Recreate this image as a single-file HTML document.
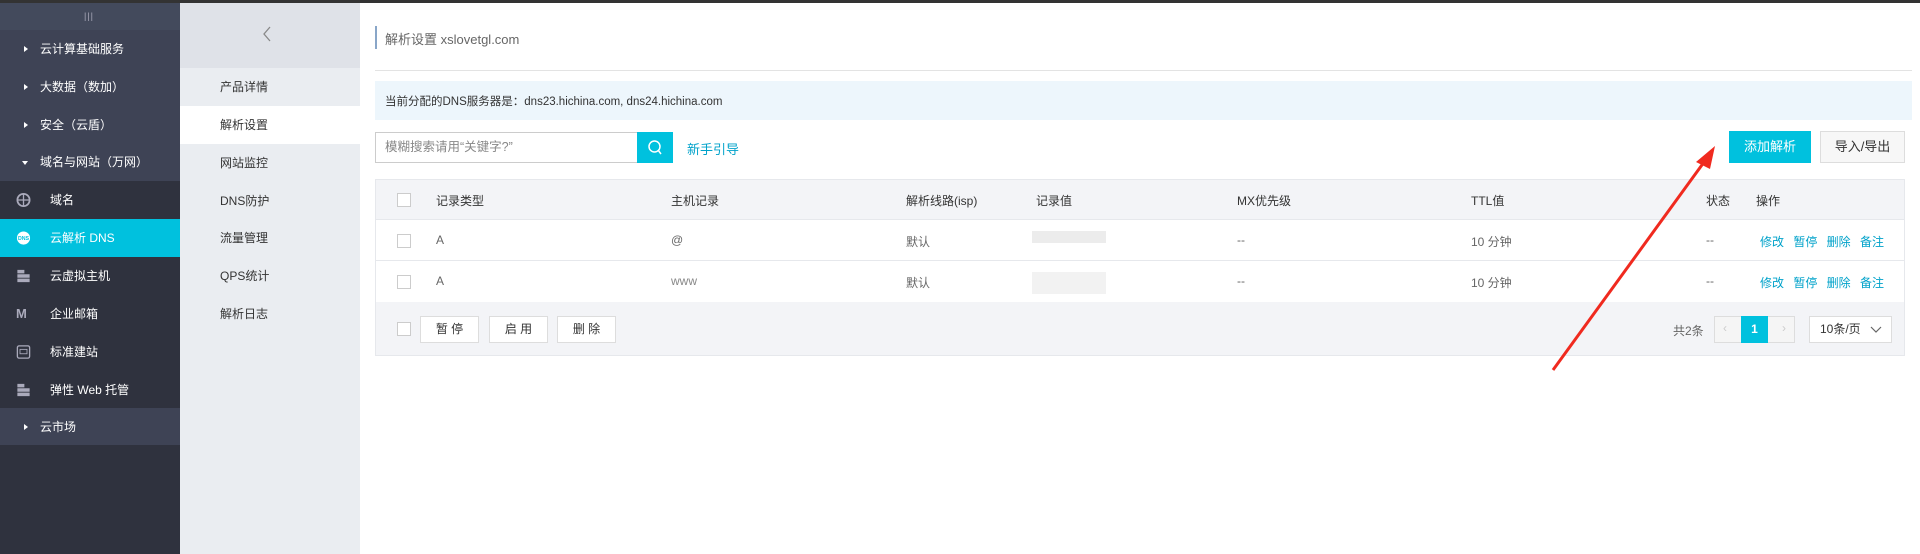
<!DOCTYPE html>
<html><head><meta charset="utf-8"><style>
*{margin:0;padding:0;box-sizing:border-box}
body{width:1920px;height:554px;overflow:hidden;background:#fff;font-family:"Liberation Sans","Noto Sans CJK SC",sans-serif;font-size:12px;color:#333;position:relative}
.abs{position:absolute}
.topbar{left:0;top:0;width:1920px;height:3px;background:#333}
.sb{left:0;top:0;width:180px;height:554px;background:#2f323e}
.sbi{position:absolute;left:0;width:180px;height:38px;line-height:38px;color:#fff;font-size:12px}
.hd{background:#3e4355}
.sbi .tri{position:absolute;left:24px;top:16px;width:0;height:0;border-top:3px solid transparent;border-bottom:3px solid transparent;border-left:4px solid #fff}
.sbi .tx{position:absolute;left:40px}
.sbi .ic{position:absolute;left:16px;top:12px;width:15px;height:14px;color:#aab}
.sbi .tx2{position:absolute;left:50px}
.sb2{left:180px;top:0;width:180px;height:554px;background:#eaedf1}
.s2i{position:absolute;left:0;width:180px;height:38px;line-height:38px;padding-left:40px;color:#333}
.hdr{font-size:13px;color:#666}
.th{color:#333}
.cb{position:absolute;width:14px;height:14px;border:1px solid #ccc;background:#fff}
.lnk{color:#00a2ca}
.btn{position:absolute;border:1px solid #ddd;background:#fff;text-align:center;color:#333}
</style></head><body>
<div class="abs sb">
 <div class="abs hd" style="left:0;top:0;width:180px;height:30px;background:#434a5c"></div>
 <div class="abs" style="left:84px;top:11px;color:#aab;font-size:9px;letter-spacing:1px">|||</div>
 <div class="sbi hd" style="top:30px"><span class="tri"></span><span class="tx">云计算基础服务</span></div>
 <div class="sbi hd" style="top:68px"><span class="tri"></span><span class="tx">大数据（数加）</span></div>
 <div class="sbi hd" style="top:106px"><span class="tri"></span><span class="tx">安全（云盾）</span></div>
 <div class="sbi hd" style="top:143px;height:38px"><span class="tri" style="left:22px;top:18px;border-left:3px solid transparent;border-right:3px solid transparent;border-top:4px solid #fff;border-bottom:0"></span><span class="tx">域名与网站（万网）</span></div>
 <div class="sbi" style="top:181px"><svg class="ic" viewBox="0 0 16 16"><circle cx="8" cy="8" r="7" fill="none" stroke="#aab" stroke-width="2"/><path d="M1 8h14M8 1v14" stroke="#aab" stroke-width="1.5"/></svg><span class="tx2">域名</span></div>
 <div class="sbi" style="top:219px;background:#00c1de"><svg class="ic" viewBox="0 0 16 16"><circle cx="8" cy="8" r="7.5" fill="#fff"/><text x="8" y="10.5" font-size="6" text-anchor="middle" fill="#00c1de" font-family="Liberation Sans" font-weight="bold">DNS</text></svg><span class="tx2">云解析 DNS</span></div>
 <div class="sbi" style="top:257px"><svg class="ic" viewBox="0 0 16 16"><rect x="1" y="1" width="8" height="4" fill="#aab"/><rect x="1" y="6" width="14" height="4" fill="#aab"/><rect x="1" y="11" width="14" height="4" fill="#aab"/></svg><span class="tx2">云虚拟主机</span></div>
 <div class="sbi" style="top:295px"><span class="abs" style="left:16px;color:#aab;font-weight:bold;font-size:13px">M</span><span class="tx2">企业邮箱</span></div>
 <div class="sbi" style="top:333px"><svg class="ic" viewBox="0 0 16 16"><rect x="1" y="1" width="14" height="14" rx="2" fill="none" stroke="#aab" stroke-width="1.5"/><rect x="4" y="5" width="8" height="5" fill="none" stroke="#aab"/></svg><span class="tx2">标准建站</span></div>
 <div class="sbi" style="top:371px"><svg class="ic" viewBox="0 0 16 16"><rect x="1" y="1" width="8" height="4" fill="#aab"/><rect x="1" y="6" width="14" height="4" fill="#aab"/><rect x="1" y="11" width="14" height="4" fill="#aab"/></svg><span class="tx2">弹性 Web 托管</span></div>
 <div class="sbi hd" style="top:408px;height:37px"><span class="tri"></span><span class="tx">云市场</span></div>
</div>
<div class="abs sb2">
 <div class="abs" style="left:0;top:0;width:180px;height:68px;background:#dfe2e8"></div>
 <svg class="abs" style="left:82px;top:26px" width="10" height="16" viewBox="0 0 10 16"><path d="M8 1L2 8l6 7" fill="none" stroke="#888" stroke-width="1.3"/></svg>
 <div class="s2i" style="top:68px">产品详情</div>
 <div class="s2i" style="top:106px;background:#fff">解析设置</div>
 <div class="s2i" style="top:144px">网站监控</div>
 <div class="s2i" style="top:182px">DNS防护</div>
 <div class="s2i" style="top:219px">流量管理</div>
 <div class="s2i" style="top:257px">QPS统计</div>
 <div class="s2i" style="top:295px">解析日志</div>
</div>
<div class="abs topbar"></div>
<div class="abs" style="left:375px;top:26px;width:2px;height:23px;background:#89a6c8"></div>
<div class="abs hdr" style="left:385px;top:29px">解析设置 xslovetgl.com</div>
<div class="abs" style="left:375px;top:70px;width:1537px;height:1px;background:#e3e3e3"></div>
<div class="abs" style="left:375px;top:81px;width:1537px;height:39px;background:#edf6fc"></div>
<div class="abs" style="left:385px;top:93px;font-size:11.5px">当前分配的DNS服务器是：dns23.hichina.com, dns24.hichina.com</div>
<div class="abs" style="left:375px;top:132px;width:263px;height:31px;border:1px solid #ccc;background:#fff;color:#888;line-height:29px;padding-left:9px;font-size:12.5px">模糊搜索请用“关键字?”</div>
<div class="abs" style="left:637px;top:132px;width:36px;height:31px;background:#00c1de"></div>
<svg class="abs" style="left:647px;top:139px" width="16" height="17" viewBox="0 0 16 17"><circle cx="7.5" cy="7.5" r="5.5" fill="none" stroke="#fff" stroke-width="1.5"/><path d="M11 11l3 4" stroke="#fff" stroke-width="1.5"/></svg>
<div class="abs lnk" style="left:687px;top:139px;font-size:13px">新手引导</div>
<div class="abs" style="left:1729px;top:131px;width:82px;height:32px;background:#00c1de;color:#fff;text-align:center;line-height:32px;font-size:13px">添加解析</div>
<div class="btn" style="left:1820px;top:131px;width:85px;height:32px;line-height:30px;font-size:13px;background:#f7f7f7">导入/导出</div>
<div class="abs" style="left:375px;top:179px;width:1530px;height:177px;border:1px solid #e6e8ec;background:#fff"></div>
<div class="abs" style="left:376px;top:180px;width:1528px;height:40px;background:#f3f4f7;border-bottom:1px solid #e6e8ec"></div>
<div class="abs" style="left:376px;top:260px;width:1528px;height:1px;background:#e6e8ec"></div>
<div class="abs" style="left:376px;top:302px;width:1528px;height:53px;background:#f3f4f7"></div>
<div class="cb" style="left:397px;top:193px"></div>
<div class="cb" style="left:397px;top:234px"></div>
<div class="cb" style="left:397px;top:275px"></div>
<div class="cb" style="left:397px;top:322px"></div>
<div class="abs th" style="left:436px;top:192px">记录类型</div>
<div class="abs th" style="left:671px;top:192px">主机记录</div>
<div class="abs th" style="left:906px;top:192px">解析线路(isp)</div>
<div class="abs th" style="left:1036px;top:192px">记录值</div>
<div class="abs th" style="left:1237px;top:192px">MX优先级</div>
<div class="abs th" style="left:1471px;top:192px">TTL值</div>
<div class="abs th" style="left:1706px;top:192px">状态</div>
<div class="abs th" style="left:1756px;top:192px">操作</div>
<div class="abs" style="left:436px;top:233px;color:#666">A</div>
<div class="abs" style="left:671px;top:233px;color:#666">@</div>
<div class="abs" style="left:906px;top:233px;color:#666">默认</div>
<div class="abs" style="left:1032px;top:231px;width:74px;height:12px;background:#ececec"></div>
<div class="abs" style="left:1237px;top:233px;color:#666">--</div>
<div class="abs" style="left:1471px;top:233px;color:#666">10 分钟</div>
<div class="abs" style="left:1706px;top:233px;color:#666">--</div>
<div class="abs lnk" style="left:1760px;top:233px;word-spacing:6px">修改 暂停 删除 备注</div>
<div class="abs" style="left:436px;top:274px;color:#666">A</div>
<div class="abs" style="left:671px;top:274px;color:#888">www</div>
<div class="abs" style="left:906px;top:274px;color:#666">默认</div>
<div class="abs" style="left:1032px;top:272px;width:74px;height:22px;background:#f2f2f2"></div>
<div class="abs" style="left:1237px;top:274px;color:#666">--</div>
<div class="abs" style="left:1471px;top:274px;color:#666">10 分钟</div>
<div class="abs" style="left:1706px;top:274px;color:#666">--</div>
<div class="abs lnk" style="left:1760px;top:274px;word-spacing:6px">修改 暂停 删除 备注</div>
<div class="btn" style="left:420px;top:316px;width:59px;height:27px;line-height:25px">暂 停</div>
<div class="btn" style="left:489px;top:316px;width:59px;height:27px;line-height:25px">启 用</div>
<div class="btn" style="left:557px;top:316px;width:59px;height:27px;line-height:25px">删 除</div>
<div class="abs" style="left:1673px;top:322px;color:#666">共2条</div>
<div class="btn" style="left:1714px;top:316px;width:81px;height:27px;background:#f5f5f5"></div>
<div class="abs" style="left:1723px;top:321px;color:#ccc">‹</div>
<div class="abs" style="left:1782px;top:321px;color:#ccc">›</div>
<div class="abs" style="left:1741px;top:316px;width:27px;height:27px;background:#00c1de;color:#fff;text-align:center;line-height:27px;font-weight:bold">1</div>
<div class="btn" style="left:1809px;top:316px;width:83px;height:27px;line-height:25px;text-align:left;padding-left:10px">10条/页</div>
<svg class="abs" style="left:1870px;top:326px" width="12" height="8" viewBox="0 0 12 8"><path d="M1 1l5 5 5-5" fill="none" stroke="#666" stroke-width="1.2"/></svg>
<svg class="abs" style="left:0;top:0" width="1920" height="554"><path d="M1553 370L1707 158" stroke="#f02a1f" stroke-width="3"/><path d="M1715 146L1696 162L1710 169Z" fill="#f02a1f"/></svg>
</body></html>
